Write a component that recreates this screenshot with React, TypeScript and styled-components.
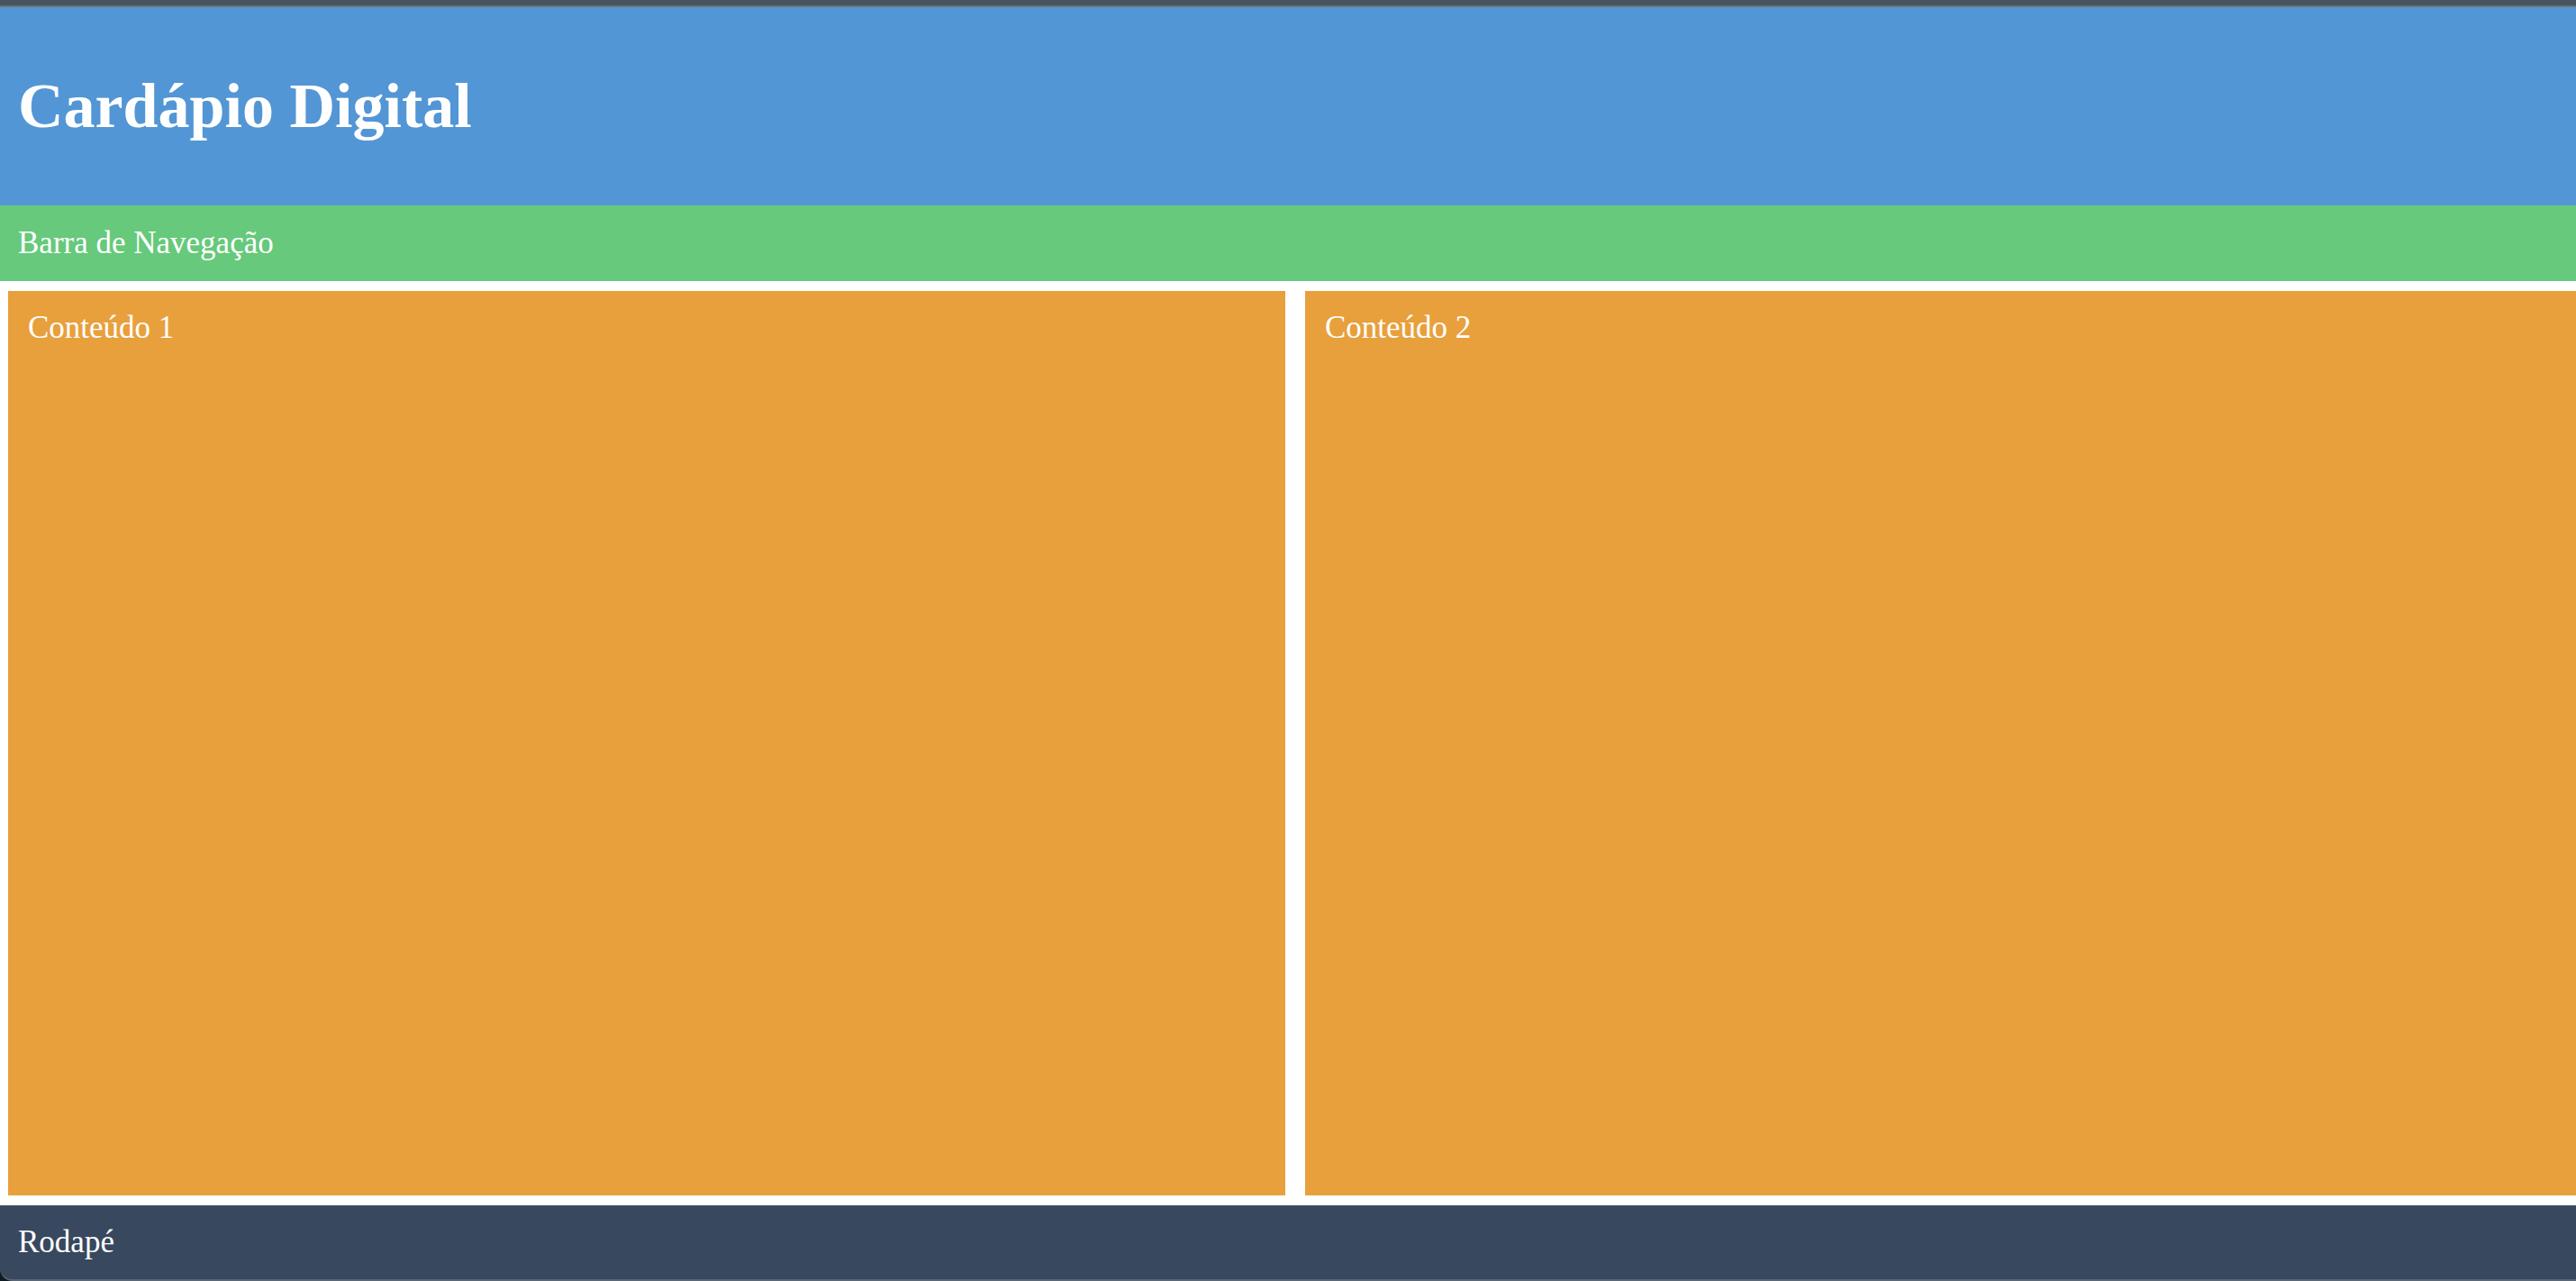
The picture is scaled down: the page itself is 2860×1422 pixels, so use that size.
import React from "react";
import styled, { createGlobalStyle } from "styled-components";

const Global = createGlobalStyle`
  html, body { margin: 0; padding: 0; background: #ffffff; }
  body { font-family: "Liberation Serif", "Times New Roman", serif; }
  * { box-sizing: border-box; }
`;

const Frame = styled.div`
  width: 2860px;
  height: 1422px;
  display: flex;
  flex-direction: column;
  background: #ffffff;
  overflow: hidden;
`;

const TopStrip = styled.div`
  height: 8px;
  flex: 0 0 8px;
  background: #47545e;
  border-bottom: 2px solid #6b7178;
`;

const Header = styled.header`
  height: 220px;
  flex: 0 0 220px;
  background: #5396d5;
  display: flex;
  align-items: center;
  padding: 0 20px;
`;

const Title = styled.h1`
  margin: 0;
  font-size: 70px;
  font-weight: bold;
  color: #ffffff;
`;

const Nav = styled.nav`
  height: 84px;
  flex: 0 0 84px;
  background: #66c97b;
  display: flex;
  align-items: center;
  padding: 0 20px;
  color: #ffffff;
  font-size: 35px;
`;

const Main = styled.main`
  flex: 1 1 auto;
  display: grid;
  grid-template-columns: 1418px 1fr;
  column-gap: 22px;
  padding: 11px 0 11px 9px;
  min-height: 0;
`;

const Panel = styled.section`
  background: #e8a03c;
  color: #ffffff;
  font-size: 35px;
  padding: 21px 22px;
`;

const FooterWrap = styled.div`
  flex: 0 0 84px;
  height: 84px;
  background: #0f1a22;
`;

const Footer = styled.footer`
  height: 84px;
  background: #38485e;
  border-bottom: 2px solid #5b6675;
  border-bottom-left-radius: 14px;
  display: flex;
  align-items: center;
  padding: 0 20px;
  color: #ffffff;
  font-size: 35px;
`;

export default function App() {
  return (
    <>
      <Global />
      <Frame>
        <TopStrip />
        <Header>
          <Title>Cardápio Digital</Title>
        </Header>
        <Nav>Barra de Navegação</Nav>
        <Main>
          <Panel>Conteúdo 1</Panel>
          <Panel>Conteúdo 2</Panel>
        </Main>
        <FooterWrap>
          <Footer>Rodapé</Footer>
        </FooterWrap>
      </Frame>
    </>
  );
}
